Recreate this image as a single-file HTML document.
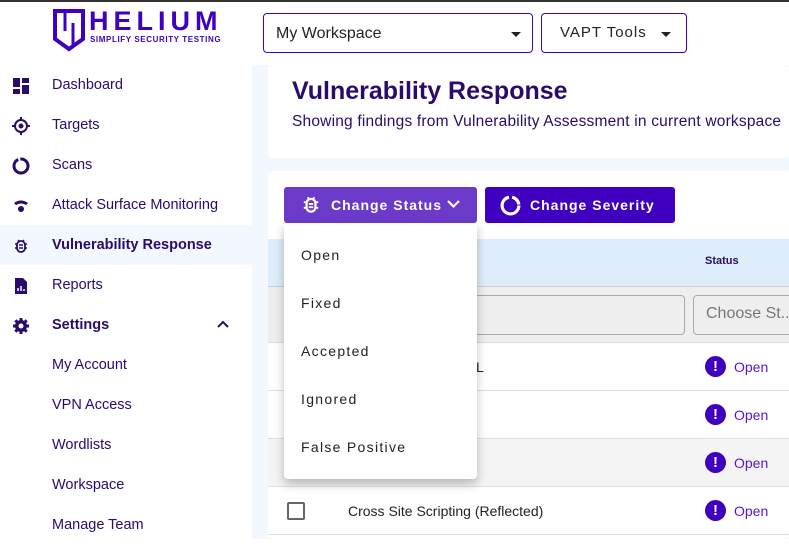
<!DOCTYPE html>
<html><head><meta charset="utf-8"><style>
*{box-sizing:border-box;margin:0;padding:0}
body{width:789px;height:539px;overflow:hidden;background:#fff;font-family:"Liberation Sans",sans-serif;position:relative;color:#2a0a6b}
.abs{position:absolute}
.topline{left:0;top:0;width:789px;height:2px;background:#333}
.nav{left:0;width:252px;height:40px;display:flex;align-items:center;font-size:14.5px;color:#2a0a6b}
.nav .ic{position:absolute;left:12px;top:12px;width:18px;height:18px}
.nav span{position:absolute;left:52px}
.sel{border:1px solid #3f00bf;border-radius:4px;height:40px;top:13px}
.tri{width:0;height:0;border-left:5px solid transparent;border-right:5px solid transparent;border-top:5px solid #222;position:absolute}
.row{left:268px;width:521px;height:48px;border-bottom:1px solid #e0e0e0}
.stat{position:absolute;left:437px;top:13px;display:flex;align-items:center;font-size:14px;color:#5a14d6}
.ex{width:21px;height:21px;border-radius:50%;background:#3f00bf;color:#fff;font-weight:bold;font-size:15px;text-align:center;line-height:21px;margin-right:8px}
.mi{position:absolute;left:17px;font-size:14px;letter-spacing:1.3px;color:#222}
</style></head><body>
<div class="abs topline"></div>
<!-- logo -->
<svg class="abs" style="left:52px;top:8px" width="34" height="44" viewBox="0 0 34 44"><path d="M3 3h28v28l-14 10L3 31z" fill="none" stroke="#3f00bf" stroke-width="4"/><path d="M13 3v20M21 15v22" stroke="#3f00bf" stroke-width="3"/></svg>
<div class="abs" style="left:89px;top:7px;font-size:27px;font-weight:bold;letter-spacing:5px;color:#3f00bf;line-height:28px">HELIUM</div>
<div class="abs" style="left:90px;top:35px;font-size:8px;font-weight:bold;color:#3f00bf;letter-spacing:.6px;white-space:nowrap">SIMPLIFY SECURITY TESTING</div>
<!-- main bg -->
<div class="abs" style="left:252px;top:65px;width:537px;height:474px;background:#f3f7fe"></div>
<div class="abs" style="left:268px;top:65px;width:521px;height:93px;background:#fff;border-radius:4px"></div>
<div class="abs" style="left:292px;top:77px;font-size:25px;font-weight:bold;color:#2a0a6b">Vulnerability Response</div>
<div class="abs" style="left:292px;top:113px;font-size:15.5px;color:#2a0a6b;white-space:nowrap;letter-spacing:.2px">Showing findings from Vulnerability Assessment in current workspace</div>
<!-- selects -->
<div class="abs sel" style="left:263px;width:270px"><span class="abs" style="left:12px;top:11px;font-size:16px;color:#222">My Workspace</span><div class="tri" style="left:247px;top:18px"></div></div>
<div class="abs sel" style="left:541px;width:146px"><span class="abs" style="left:18px;top:10px;font-size:15px;color:#222;letter-spacing:1px">VAPT Tools</span><div class="tri" style="left:119px;top:18px"></div></div>
<!-- sidebar -->
<div class="abs" style="left:0;top:225px;width:252px;height:40px;background:#f3f7fe"></div>
<div class="abs nav" style="top:65px"><svg class="ic" viewBox="0 0 18 18"><path d="M1 1h7v9H1zM10 1h7v5h-7zM10 8h7v9h-7zM1 12h7v5H1z" fill="#2a0a6b"/></svg><span>Dashboard</span></div>
<div class="abs nav" style="top:105px"><svg class="ic" viewBox="0 0 18 18"><circle cx="9" cy="9" r="6" fill="none" stroke="#2a0a6b" stroke-width="2"/><circle cx="9" cy="9" r="2.5" fill="#2a0a6b"/><path d="M9 0v3M9 15v3M0 9h3M15 9h3" stroke="#2a0a6b" stroke-width="2"/></svg><span>Targets</span></div>
<div class="abs nav" style="top:145px"><svg class="ic" viewBox="0 0 18 18"><circle cx="9" cy="9" r="7" fill="none" stroke="#2a0a6b" stroke-width="3" stroke-dasharray="30 2 12 2"/></svg><span>Scans</span></div>
<div class="abs nav" style="top:185px"><svg class="ic" viewBox="0 0 18 18"><path d="M2 6q7-5 14 0l-2 2q-5-3-10 0z" fill="#2a0a6b"/><circle cx="9" cy="12" r="3" fill="#2a0a6b"/></svg><span>Attack Surface Monitoring</span></div>
<div class="abs nav" style="top:225px"><svg class="ic" viewBox="0 0 18 18"><rect x="5" y="4" width="8" height="11" rx="4" fill="none" stroke="#2a0a6b" stroke-width="1.8"/><path d="M7 8h4M7 11h4M3 7h2M3 11h2M13 7h2M13 11h2M6 3l1 1M12 3l-1 1" stroke="#2a0a6b" stroke-width="1.5"/></svg><span style="font-weight:bold">Vulnerability Response</span></div>
<div class="abs nav" style="top:265px"><svg class="ic" viewBox="0 0 18 18"><path d="M3 1h8l4 4v12H3z" fill="#2a0a6b"/><path d="M6 14v-3M9 14v-5M12 14v-2" stroke="#fff" stroke-width="1.5"/></svg><span>Reports</span></div>
<div class="abs nav" style="top:305px"><svg class="ic" viewBox="0 0 18 18"><circle cx="9" cy="9" r="6" fill="#2a0a6b"/><path d="M9 1v16M1 9h16M3.3 3.3l11.4 11.4M14.7 3.3L3.3 14.7" stroke="#2a0a6b" stroke-width="3"/><circle cx="9" cy="9" r="2.5" fill="#fff"/></svg><span style="font-weight:bold">Settings</span><svg class="abs" style="left:217px;top:15px" width="12" height="8" viewBox="0 0 12 8"><path d="M1 7l5-5 5 5" fill="none" stroke="#2a0a6b" stroke-width="2"/></svg></div>
<div class="abs nav" style="top:345px"><span>My Account</span></div>
<div class="abs nav" style="top:385px"><span>VPN Access</span></div>
<div class="abs nav" style="top:425px"><span>Wordlists</span></div>
<div class="abs nav" style="top:465px"><span>Workspace</span></div>
<div class="abs nav" style="top:505px"><span>Manage Team</span></div>
<!-- table card -->
<div class="abs" style="left:268px;top:171px;width:521px;height:368px;background:#fff;border-radius:4px"></div>
<div class="abs" style="left:284px;top:187px;width:193px;height:36px;background:#6b3ac8;border-radius:3px;color:#fff;font-size:14px;font-weight:bold;letter-spacing:1px">
<svg class="abs" style="left:17px;top:8px" width="20" height="20" viewBox="0 0 18 18"><rect x="5" y="3.5" width="8" height="11.5" rx="4" fill="none" stroke="#fff" stroke-width="2"/><path d="M7 8h4M7 11h4M2.5 6.5h2.5M2.5 11.5h2.5M13 6.5h2.5M13 11.5h2.5M6 2l1 1.5M12 2l-1 1.5" stroke="#fff" stroke-width="1.7"/></svg>
<span class="abs" style="left:47px;top:10px">Change Status</span>
<svg class="abs" style="left:163px;top:13px" width="13" height="9" viewBox="0 0 13 9"><path d="M1 1l5.5 5.5L12 1" fill="none" stroke="#fff" stroke-width="2.2"/></svg></div>
<div class="abs" style="left:485px;top:187px;width:190px;height:36px;background:#3f00bf;border-radius:3px;color:#fff;font-size:14px;font-weight:bold;letter-spacing:1px">
<svg class="abs" style="left:15px;top:8px" width="21" height="21" viewBox="0 0 20 20"><circle cx="10" cy="10" r="8" fill="none" stroke="#fff" stroke-width="3" stroke-dasharray="36 3 10 3"/></svg>
<span class="abs" style="left:45px;top:10px">Change Severity</span></div>
<div class="abs" style="left:268px;top:239px;width:521px;height:48px;background:#deedfb;border-bottom:1px solid #ccd"></div>
<div class="abs" style="left:705px;top:255px;font-size:11px;font-weight:bold;color:#2a0a6b">Status</div>
<div class="abs" style="left:268px;top:287px;width:521px;height:56px;background:#eee;border-bottom:1px solid #ddd"></div>
<div class="abs" style="left:470px;top:295px;width:215px;height:40px;border:1px solid #aaa;border-radius:4px"></div>
<div class="abs" style="left:693px;top:295px;width:110px;height:40px;border:1px solid #aaa;border-radius:4px;font-size:16px;color:#777;padding:9px 0 0 12px">Choose St..</div>
<div class="abs row" style="top:343px"><span class="abs" style="left:208px;top:16px;font-size:14px;color:#222">L</span><div class="stat"><div class="ex">!</div>Open</div></div>
<div class="abs row" style="top:391px"><div class="stat"><div class="ex">!</div>Open</div></div>
<div class="abs row" style="top:439px;background:#f4f4f4"><div class="stat"><div class="ex">!</div>Open</div></div>
<div class="abs row" style="top:487px"><div class="abs" style="left:19px;top:15px;width:18px;height:18px;border:2px solid #666;border-radius:2px"></div><span class="abs" style="left:80px;top:16px;font-size:14px;color:#222">Cross Site Scripting (Reflected)</span><div class="stat"><div class="ex">!</div>Open</div></div>
<!-- menu -->
<div class="abs" style="left:284px;top:223px;width:193px;height:256px;background:#fff;border-radius:0 0 4px 4px;box-shadow:0 5px 10px rgba(0,0,0,.25)">
<span class="mi" style="top:24px">Open</span>
<span class="mi" style="top:72px">Fixed</span>
<span class="mi" style="top:120px">Accepted</span>
<span class="mi" style="top:168px">Ignored</span>
<span class="mi" style="top:216px">False Positive</span>
</div>
</body></html>
